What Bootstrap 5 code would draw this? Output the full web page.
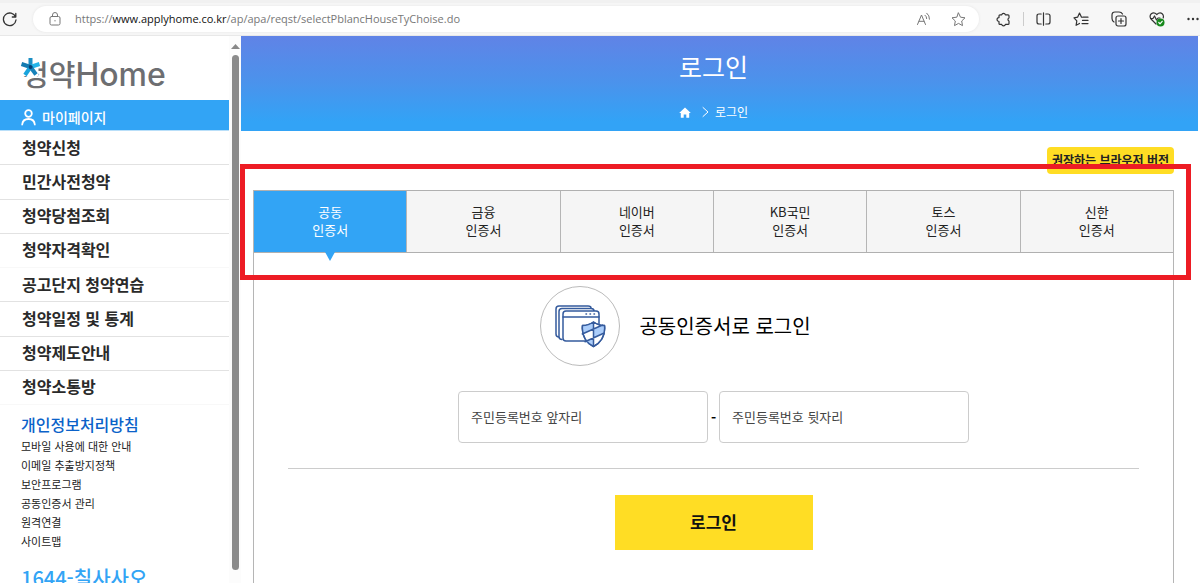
<!DOCTYPE html>
<html lang="ko">
<head>
<meta charset="utf-8">
<meta name="viewport" content="width=device-width, initial-scale=1">
<title>청약Home 로그인</title>
<link href="https://cdn.jsdelivr.net/npm/bootstrap@5.3.0/dist/css/bootstrap.min.css" rel="stylesheet">
<style>
  body { font-family: "Noto Sans", "Noto Sans CJK KR", sans-serif; font-size: 14px; color: #222; background: #fff; }
  .ko { font-family: "Noto Sans CJK KR", sans-serif; }
  a { color: inherit; text-decoration: none; }
  svg { display: block; flex: none; fill: none; stroke: currentColor; stroke-linecap: round; stroke-linejoin: round; }
  .icon-btn { background: none; border: 0; padding: 0; color: #333; flex: none; }

  .browser-bar { height: 36px; background: #f7f7f7; border-top: 3px solid #f1f1f1; border-bottom: 1px solid #e8e8e8; padding: 0 0 0 2px; }
  .address { height: 26px; background: #fff; border-radius: 13px; margin-left: 15px; padding: 0 13px 0 15px; box-shadow: 0 0 3px #e4e4e4; }
  .address svg { color: #777; }
  .url-text { font: 11px/18px "Open Sans", sans-serif; color: #777; margin-left: 13px; }
  .url-text b { font-weight: 400; color: #111; }
  .tools { padding-left: 17px; gap: 22px; width: 221px; }
  .tool-rule { width: 1px; height: 14px; background: #ccc; margin: 0 -10px; }

  .side { width: 241px; flex: none; }
  .brand { height: 64px; padding: 15px 0 0 22px; color: #6d6e71; }
  .brand-ko { font-size: 29px; line-height: 44px; font-weight: 500; }
  .brand-en { font: 500 32px/48px "Inter", sans-serif; }
  .brand-star { position: absolute; left: 20px; top: 20px; }
  .mypage { height: 31px; background: #32a4f5; color: #fff; padding: 4px 0 0 21px; gap: 6px; border-bottom: 1px solid #b9dff9; font-weight: 500; }
  .menu { height: 274px; font-size: 16px; font-weight: 700; line-height: 20px; color: #2a2a2a; }
  .menu li { border-bottom: 1px solid #e2e2e2; padding: 0 0 2px 22px; }
  .menu li.soft { border-color: #f8f8f8; }
  .policy { padding: 8px 0 0 21px; }
  .policy h2 { font-size: 16px; line-height: 22px; font-weight: 500; color: #0b62c9; margin: 0 0 2px; }
  .policy li { font-size: 11px; line-height: 19px; }
  .hotline { font-size: 20px; line-height: 30px; font-weight: 500; color: #32a4f5; padding: 12px 0 0 21px; }
  .scroll-rail { width: 12px; background: #fcfcfc; padding: 8px 2px 13px 3px; gap: 6px; }
  .scroll-thumb { background: #8b8b8b; border-radius: 4px; width: 7px; }

  .banner { height: 95px; background: linear-gradient(#6083e6, #4a93ec 50%, #32a3f6 90%); color: #fff; padding-top: 12px; margin-right: 2px; }
  .banner h1 { font-size: 25px; line-height: 36px; font-weight: 400; margin: 0; padding-right: 12px; }
  .crumbs { font-size: 12px; line-height: 18px; padding: 19px 12px 0 0; }
  .page-body { padding: 16px 26px 0 12px; }
  .version-btn { background: #ffdd24; color: #222; font-size: 12px; line-height: 18px; font-weight: 700; border: 0; border-radius: 4px; padding: 4px 5px 5px; }
  .auth { margin-top: 16px; border: 1px solid #b5b5b5; border-bottom: 0; border-top: 0; }
  .cert-tabs { border-top: 1px solid #b0b0b0; border-bottom: 1px solid #b0b0b0; height: 63px; }
  .cert-tabs button { background: #f5f5f5; border: 0; border-left: 1px solid #b5b5b5; font-size: 13px; line-height: 18px; color: #222; flex: 1 1 0; padding: 0 0 2px; }
  .cert-tabs button:first-child { border-left: 0; }
  .cert-tabs button.active { background: #32a4f5; color: #fff; }
  .cert-tabs button.active::after { content: ""; position: absolute; left: 50%; top: 100%; margin-left: -5px; border: 5px solid transparent; border-top: 9px solid #32a4f5; border-bottom: 0; }
  .highlight { position: absolute; inset: -26px -18px -27px -14px; border: 5px solid #ed1c24; pointer-events: none; z-index: 2; }
  .login-form { padding: 33px 34px 0 34px; }
  .cert-head { padding-right: 76px; gap: 19px; }
  .cert-icon { width: 80px; height: 80px; border: 1px solid #bbb; border-radius: 50%; color: #355b9d; }
  .login-form h2 { font-size: 20px; line-height: 30px; font-weight: 400; color: #000; margin: 0; }
  .id-row { padding-top: 25px; gap: 3px; }
  .id-row input { width: 250px; height: 52px; border: 1px solid #ccc; border-radius: 4px; padding: 0 12px 2px; font-size: 13px; color: #444; background: #fff; }
  .id-row input::placeholder { color: #444; opacity: 1; }
  .id-row span { width: 5px; color: #000; font-weight: 700; }
  .rule { border-top: 1px solid #ccc; margin: 25px 0 26px; }
  .login-btn { background: #ffdd24; border: 0; width: 198px; height: 55px; font-size: 17px; font-weight: 700; color: #111; padding: 0 0 2px; }
</style>
</head>
<body class="ko">
<div class="vh-100 overflow-hidden d-flex flex-column">
  <header class="browser-bar d-flex align-items-center flex-shrink-0">
    <button class="icon-btn" aria-label="새로 고침"><svg width="16" height="16" viewBox="0 0 16 16" stroke-width="1.3"><path d="M13.6 6A6.300 6.300 0 1 0 14 9M13.800 2.500V6h-3.500"/></svg></button>
    <div class="address d-flex align-items-center flex-grow-1">
      <svg width="14" height="14" viewBox="0 0 14 14"><rect x="2" y="4.500" width="10" height="8.500" rx="1.500"/><path d="M4.500 4.500V3a2.500 2.500 0 0 1 5 0v1.500M7 8.500v.5"/></svg>
      <a href="#" class="url-text flex-grow-1">https://<b>www.applyhome.co.kr</b>/ap/apa/reqst/selectPblancHouseTyChoise.do</a>
      <button class="icon-btn me-3 pe-1" aria-label="소리내어 읽기"><svg width="15" height="15" viewBox="0 0 15 15"><path d="M1.500 12.500 5.500 3l4 9.500M3 9.300h5M9 3.200q1.800 1.300 1.700 3.400M10.800 1.200q2.900 2.300 2.700 6"/></svg></button>
      <button class="icon-btn" aria-label="즐겨찾기 추가"><svg width="15" height="15" viewBox="0 0 15 15"><path d="m7.500 1 2 4.200 4.500.6-3.300 3.200.8 4.600-4-2.200-4 2.200.8-4.600L1 5.800l4.500-.6z"/></svg></button>
    </div>
    <div class="tools d-flex align-items-center">
      <button class="icon-btn" aria-label="확장"><svg width="15" height="15" viewBox="0 0 15 15" stroke-width="1.2"><path d="M4 2.800h1.700a1.900 1.900 0 0 1 3.700 0H12q1 0 1 1v2.200a1.600 1.600 0 0 0 0 3v2.400q0 1-1 1H9.400a1.900 1.900 0 0 1-3.700 0H4q-1 0-1-1V9.500a1.900 1.900 0 0 1 0-3.900V3.800q0-1 1-1z"/></svg></button>
      <span class="tool-rule"></span>
      <button class="icon-btn" aria-label="화면 분할"><svg width="15" height="14" viewBox="0 0 15 14" stroke-width="1.200"><path d="M5.200 2H3q-2 0-2 2v6q0 2 2 2h2.200M9.800 2H12q2 0 2 2v6q0 2-2 2H9.800M7.500 .8v12.400"/></svg></button>
      <button class="icon-btn" aria-label="즐겨찾기"><svg width="16" height="15" viewBox="0 0 16 15" stroke-width="1.200"><path d="M9 5.200h-.5L6.500 1 4.600 5.200 1 5.800l2.800 3-.7 4.500 3.400-1.900M10 5.200h5M9.500 8.400H15M9 11.600h6"/></svg></button>
      <button class="icon-btn" aria-label="컬렉션"><svg width="16" height="16" viewBox="0 0 16 16" stroke-width="1.200"><rect x="5" y="5" width="10" height="10" rx="2"/><path d="M10 7.500v5M7.500 10h5M3 11Q1 10 1 7.500V4q0-3 3-3h4q2.500 0 3.500 2"/></svg></button>
      <button class="icon-btn" aria-label="브라우저 상태"><svg width="16" height="16" viewBox="0 0 16 16" stroke-width="1.200"><path d="M7 13 2 8Q0 5 2.300 2.800 5 .8 7.800 3.500 10.800.8 13.200 2.800 15 4.500 14.200 7M1.500 7.500H4l1.500-2.500 2 4L9 7h2"/><circle cx="11.500" cy="11.500" r="4" fill="#16891b" stroke="none"/><path d="m9.800 11.500 1.200 1.300 2.200-2.500" stroke="#fff"/></svg></button>
      <button class="icon-btn" aria-label="설정"><svg width="13" height="4" viewBox="0 0 13 4"><g fill="#333" stroke="none"><circle cx="1.500" cy="2" r="1.200"/><circle cx="6" cy="2" r="1.200"/><circle cx="10.500" cy="2" r="1.200"/></g></svg></button>
    </div>
  </header>

  <div class="d-flex flex-grow-1 overflow-hidden">
    <aside class="side d-flex">
      <div class="flex-grow-1 overflow-hidden">
        <div class="brand position-relative">
          <a href="#" class="d-flex"><span class="brand-ko">청약</span><span class="brand-en">Home</span></a>
          <svg class="brand-star" width="22" height="22" viewBox="0 0 22 22"><path d="M0 0h18.500v20H0z" fill="#fff" stroke="none"/><g stroke-width="4" stroke-linecap="butt"><path d="M10.500 11V2" stroke="#1b8fc4"/><path d="M10.500 11 1.500 8" stroke="#147bb0"/><path d="m10.500 11 9-3" stroke="#25b4e8"/><path d="m10.500 11-5.500 8" stroke="#1aa4dc"/><path d="m10.500 11 5.500 7.500" stroke="#1681b9"/></g><circle cx="10.500" cy="11" r="2" fill="#073e72" stroke="none"/></svg>
        </div>
        <a href="#" class="mypage d-flex align-items-center">
          <svg width="15" height="17" viewBox="0 0 15 17" stroke-width="1.800"><circle cx="7.500" cy="4.500" r="3.300"/><path d="M1.200 15.500q.5-5.500 6.300-5.500t6.300 5.500"/></svg>마이페이지</a>
        <ul class="menu list-unstyled d-flex flex-column mb-0">
          <li class="flex-fill d-flex align-items-center"><a href="#">청약신청</a></li>
          <li class="flex-fill d-flex align-items-center"><a href="#">민간사전청약</a></li>
          <li class="flex-fill d-flex align-items-center"><a href="#">청약당첨조회</a></li>
          <li class="flex-fill d-flex align-items-center soft"><a href="#">청약자격확인</a></li>
          <li class="flex-fill d-flex align-items-center"><a href="#">공고단지 청약연습</a></li>
          <li class="flex-fill d-flex align-items-center"><a href="#">청약일정 및 통계</a></li>
          <li class="flex-fill d-flex align-items-center"><a href="#">청약제도안내</a></li>
          <li class="flex-fill d-flex align-items-center soft"><a href="#">청약소통방</a></li>
        </ul>
        <div class="policy">
          <h2><a href="#">개인정보처리방침</a></h2>
          <ul class="list-unstyled mb-0">
            <li><a href="#">모바일 사용에 대한 안내</a></li>
            <li><a href="#">이메일 추출방지정책</a></li>
            <li><a href="#">보안프로그램</a></li>
            <li><a href="#">공동인증서 관리</a></li>
            <li><a href="#">원격연결</a></li>
            <li><a href="#">사이트맵</a></li>
          </ul>
        </div>
        <div class="hotline">1644-칠사사오</div>
      </div>
      <div class="scroll-rail d-flex flex-column align-items-center flex-shrink-0">
        <svg width="9" height="5" viewBox="0 0 9 5"><path d="M4.500 0 9 5H0z" fill="#888" stroke="none"/></svg>
        <div class="scroll-thumb flex-grow-1"></div>
      </div>
    </aside>

    <main class="flex-grow-1 d-flex flex-column">
      <div class="banner text-center flex-shrink-0">
        <h1>로그인</h1>
        <nav class="crumbs d-flex justify-content-center align-items-center" aria-label="현재 위치">
          <a href="#" aria-label="홈"><svg width="12" height="11" viewBox="0 0 12 11"><path d="M6 .5 11.800 6h-1.600v4.700H7.300V7.500H4.700v3.200H1.800V6H.2z" fill="#fff" stroke="none"/></svg></a>
          <svg class="ms-2 me-1" width="12" height="12" viewBox="0 0 12 12"><path d="m4 1.500 5 4.500-5 4.500"/></svg>
          <a href="#">로그인</a>
        </nav>
      </div>
      <div class="page-body flex-grow-1 d-flex flex-column">
        <div class="text-end"><button class="version-btn d-inline-block align-top">권장하는 브라우저 버전</button></div>
        <section class="auth flex-grow-1">
          <div class="position-relative">
            <div class="cert-tabs d-flex" role="tablist">
              <button role="tab" aria-selected="true" class="active position-relative">공동<br>인증서</button>
              <button role="tab">금융<br>인증서</button>
              <button role="tab">네이버<br>인증서</button>
              <button role="tab">KB국민<br>인증서</button>
              <button role="tab">토스<br>인증서</button>
              <button role="tab">신한<br>인증서</button>
            </div>
            <div class="highlight"></div>
          </div>
          <form class="login-form">
            <div class="cert-head d-flex justify-content-center align-items-center">
              <div class="cert-icon d-flex justify-content-center align-items-center">
                <svg width="52" height="44" viewBox="0 0 52 44" stroke-width="1.500">
                  <path d="M5 33q-3 0-3-3V5q0-3 3-3h29q3 0 3 2" fill="#fff"/>
                  <path d="M8 35.500q-3 0-3-3V7.500q0-3 3-3h29q3 0 3 2.500" fill="#fff"/>
                  <rect x="9" y="7" width="36" height="30" rx="3" fill="#fff"/>
                  <path d="M9 13h36M32 10h.5M36 10h.5M40 10h.5"/>
                  <path d="M39.500 18q5 3.500 11 3.500Q52 36 39.500 42.500 27 36 28.500 21.500q6 0 11-3.500z" fill="#fff"/>
                  <path d="M39.500 18v7l-11.200 5Q27.800 25 28.500 21.500q6 0 11-3.500zM39.500 25l9.500-4 1.500.5q.4 4 0 7.500l-11 5zM39.500 34v8.500Q34 40 31 37.500z" fill="#abcdfa" stroke="none"/>
                  <path d="M39.500 18v24M28.300 30 48.500 21M31 37.800 50.200 29M39.500 18q5 3.500 11 3.500Q52 36 39.500 42.500 27 36 28.500 21.500q6 0 11-3.500z"/>
                </svg>
              </div>
              <h2>공동인증서로 로그인</h2>
            </div>
            <div class="id-row d-flex justify-content-center align-items-center">
              <input class="ko" type="text" aria-label="주민등록번호 앞자리" placeholder="주민등록번호 앞자리">
              <span>-</span>
              <input class="ko" type="password" aria-label="주민등록번호 뒷자리" placeholder="주민등록번호 뒷자리">
            </div>
            <div class="rule"></div>
            <div class="text-center"><button type="button" class="login-btn">로그인</button></div>
          </form>
        </section>
      </div>
    </main>
  </div>
</div>
<script src="https://cdn.jsdelivr.net/npm/bootstrap@5.3.0/dist/js/bootstrap.bundle.min.js"></script>
</body>
</html>
